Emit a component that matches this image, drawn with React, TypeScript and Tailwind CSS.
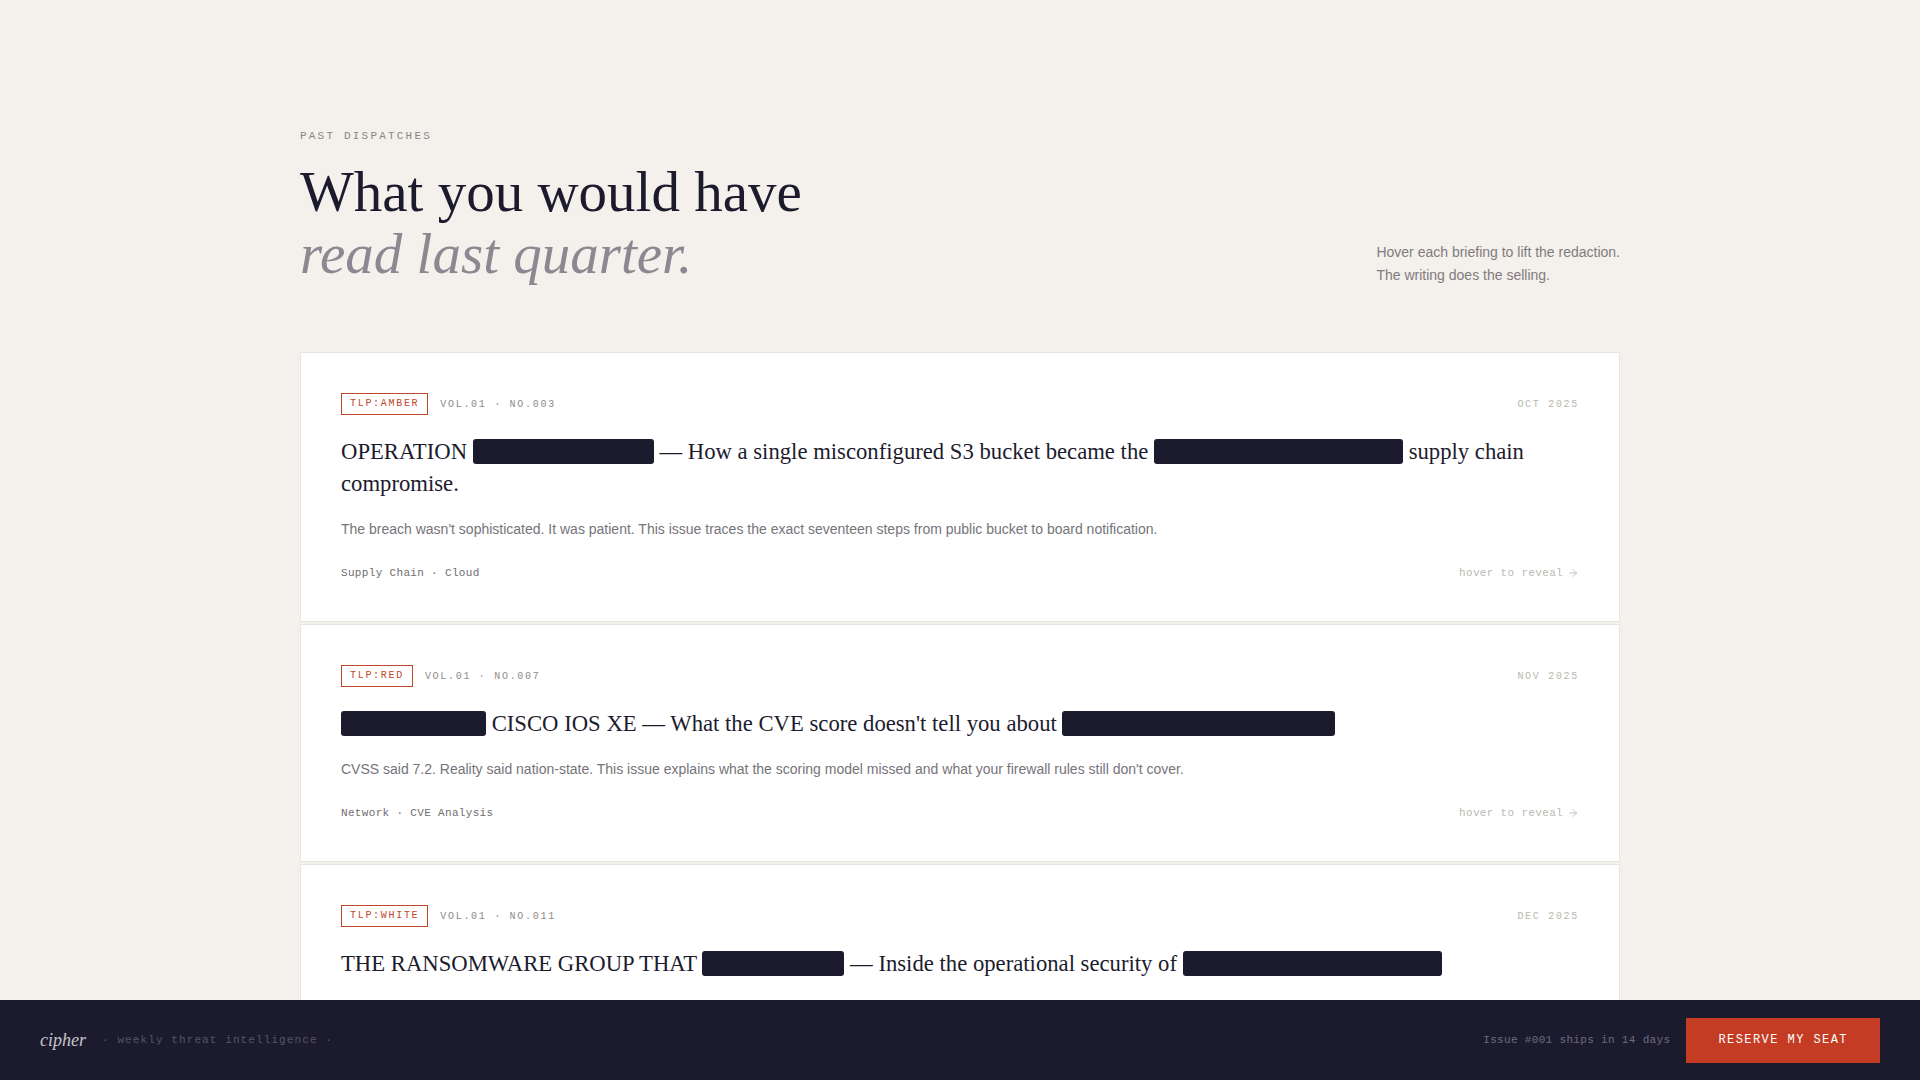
import React from "react";
import { ArrowRight } from "lucide-react";

type Part = string | number;

type Dispatch = {
   tlp: string;
   issue: string;
   date: string;
   title: Part[];
   summary: string;
   tags: string;
};

const dispatches: Dispatch[] = [
   {
      tlp: "TLP:AMBER",
      issue: "VOL.01 · NO.003",
      date: "OCT 2025",
      title: [
         "OPERATION",
         181,
         "— How a single misconfigured S3 bucket became the",
         249,
         "supply chain compromise.",
      ],
      summary:
         "The breach wasn't sophisticated. It was patient. This issue traces the exact seventeen steps from public bucket to board notification.",
      tags: "Supply Chain · Cloud",
   },
   {
      tlp: "TLP:RED",
      issue: "VOL.01 · NO.007",
      date: "NOV 2025",
      title: [145, "CISCO IOS XE — What the CVE score doesn't tell you about", 273],
      summary:
         "CVSS said 7.2. Reality said nation-state. This issue explains what the scoring model missed and what your firewall rules still don't cover.",
      tags: "Network · CVE Analysis",
   },
   {
      tlp: "TLP:WHITE",
      issue: "VOL.01 · NO.011",
      date: "DEC 2025",
      title: ["THE RANSOMWARE GROUP THAT", 142, "— Inside the operational security of", 259],
      summary:
         "They negotiate like a SaaS vendor and ship like one too. A look at the playbook, the affiliates, and the one mistake that unmasked them.",
      tags: "Ransomware · Threat Actors",
   },
];

const mono = "font-['Liberation_Mono','DejaVu_Sans_Mono',monospace]";
const serif = "font-['Liberation_Serif','Times_New_Roman',serif]";
const sans = "font-['Liberation_Sans',Arial,sans-serif]";

// blacked-out block standing in for a hidden phrase
const Redacted = ({ width }: { width: number }) => (
   <span
      className="inline-block h-[25px] align-middle rounded-[3px] bg-[#1c1b2e] -translate-y-[2px]"
      style={{ width }}
   />
);

const DispatchCard = ({ item }: { item: Dispatch }) => {
   return (
      <article className="bg-white border border-[#e8e4de] p-10">
         <div className={`flex items-center justify-between mb-[21px] ${mono} text-[10px] tracking-[0.17em]`}>
            <div className="flex items-center gap-3">
               <span className="border border-[#c2452d] text-[#c2452d] px-[8px] py-[4px] leading-3">
                  {item.tlp}
               </span>
               <span className="text-[#8c8b88]">{item.issue}</span>
            </div>
            <span className="text-[#bab7b1]">{item.date}</span>
         </div>
         <h3 className={`${serif} text-[22.7px] leading-[32px] text-[#1c1b2e] mb-[18px]`}>
            {item.title.map((part, i) => (
               <React.Fragment key={i}>
                  {i > 0 && " "}
                  {typeof part === "number" ? <Redacted width={part} /> : part}
               </React.Fragment>
            ))}
         </h3>
         <p className={`${sans} text-[14px] leading-[22px] text-[#76747a]`}>{item.summary}</p>
         <div className={`flex items-center justify-between mt-[25px] ${mono} text-[11px] leading-4 tracking-[0.03em]`}>
            <span className="text-[#6f6d70]">{item.tags}</span>
            <span className="flex items-center gap-1 text-[#bcb9b4]">
               hover to reveal
               <ArrowRight className="w-3 h-3" strokeWidth={1.75} />
            </span>
         </div>
      </article>
   );
};

export default function App() {
   return (
      <div className="min-h-screen bg-[#f4f0eb] pb-48">
         <section className="mx-auto max-w-[1320px] pt-[128px]">
            <div className="flex items-end justify-between mb-[68px]">
               <div>
                  <p className={`${mono} text-[11px] leading-4 tracking-[0.2em] text-[#8a8780] uppercase mb-[17px]`}>
                     Past Dispatches
                  </p>
                  <h2 className={`${serif} text-[57px] leading-[1.08] text-[#1c1b2e]`}>
                     What you would have
                     <br />
                     <em className="text-[#8b8891]">read last quarter.</em>
                  </h2>
               </div>
               <p className={`${sans} text-[14px] leading-[23px] text-[#7f7c80] -mb-[3px]`}>
                  Hover each briefing to lift the redaction.
                  <br />
                  The writing does the selling.
               </p>
            </div>

            <div className="flex flex-col gap-[2px]">
               {dispatches.map((item) => (
                  <DispatchCard key={item.issue} item={item} />
               ))}
            </div>
         </section>

         <footer className="fixed bottom-0 left-0 right-0 h-20 bg-[#1c1b2e] flex items-center justify-between px-10">
            <div className="flex items-center gap-4">
               <span className={`${serif} italic text-[18px] text-[#c6c3cd]`}>cipher</span>
               <span className={`${mono} text-[11px] tracking-[0.1em] text-[#56546b]`}>
                  · weekly threat intelligence ·
               </span>
            </div>
            <div className="flex items-center gap-4">
               <span className={`${mono} text-[11px] tracking-[0.03em] text-[#6d6b80]`}>
                  Issue #001 ships in 14 days
               </span>
               <button
                  className={`${mono} h-[45px] px-8 bg-[#c43c23] text-white text-[12px] tracking-[0.12em] hover:opacity-90`}
               >
                  RESERVE MY SEAT
               </button>
            </div>
         </footer>
      </div>
   );
}
